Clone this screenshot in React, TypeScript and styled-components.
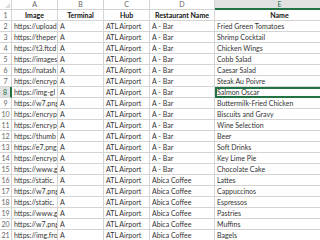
import React from 'react';
import styled, { createGlobalStyle } from 'styled-components';

const GlobalStyle = createGlobalStyle`
  html, body {
    margin: 0;
    padding: 0;
    background: #ffffff;
    overflow: hidden;
  }
`;

const rows: [string, string, string, string, string][] = [
  ['https://upload', 'A', 'ATL Airport', 'A - Bar', 'Fried Green Tomatoes'],
  ['https://theper', 'A', 'ATL Airport', 'A - Bar', 'Shrimp Cocktail'],
  ['https://t3.ftcd', 'A', 'ATL Airport', 'A - Bar', 'Chicken Wings'],
  ['https://images', 'A', 'ATL Airport', 'A - Bar', 'Cobb Salad'],
  ['https://natash', 'A', 'ATL Airport', 'A - Bar', 'Caesar Salad'],
  ['https://encryp', 'A', 'ATL Airport', 'A - Bar', 'Steak Au Poivre'],
  ['https://img-gl', 'A', 'ATL Airport', 'A - Bar', 'Salmon Oscar'],
  ['https://w7.png', 'A', 'ATL Airport', 'A - Bar', 'Buttermilk-Fried Chicken'],
  ['https://encryp', 'A', 'ATL Airport', 'A - Bar', 'Biscuits and Gravy'],
  ['https://encryp', 'A', 'ATL Airport', 'A - Bar', 'Wine Selection'],
  ['https://thumb', 'A', 'ATL Airport', 'A - Bar', 'Beer'],
  ['https://e7.png', 'A', 'ATL Airport', 'A - Bar', 'Soft Drinks'],
  ['https://encryp', 'A', 'ATL Airport', 'A - Bar', 'Key Lime Pie'],
  ['https://www.g', 'A', 'ATL Airport', 'A - Bar', 'Chocolate Cake'],
  ['https://static.', 'A', 'ATL Airport', 'Abica Coffee', 'Lattes'],
  ['https://w7.png', 'A', 'ATL Airport', 'Abica Coffee', 'Cappuccinos'],
  ['https://static.', 'A', 'ATL Airport', 'Abica Coffee', 'Espressos'],
  ['https://www.g', 'A', 'ATL Airport', 'Abica Coffee', 'Pastries'],
  ['https://w7.png', 'A', 'ATL Airport', 'Abica Coffee', 'Muffins'],
  ['https://img.fro', 'A', 'ATL Airport', 'Abica Coffee', 'Bagels'],
];

const headers = ['Image', 'Terminal', 'Hub', 'Restaurant Name', 'Name'];
const letters = ['A', 'B', 'C', 'D', 'E'];

const SELECTED_ROW = 8;
const SELECTED_COL = 4;

const Sheet = styled.div`
  display: grid;
  grid-template-columns: 12px 46px 46px 46px 65px 130px;
  grid-template-rows: 10px repeat(21, 11px);
  width: 320px;
  height: 240px;
  overflow: hidden;
  font-family: Lato, 'Liberation Sans', sans-serif;
  font-size: 7px;
  color: #333;
`;

const Corner = styled.div`
  background: #ffffff;
  border-right: 1px solid #d4d4d4;
  border-bottom: 1px solid #d4d4d4;
  position: relative;

  &::after {
    content: '';
    position: absolute;
    right: 1px;
    bottom: 1px;
    border-left: 5px solid transparent;
    border-bottom: 5px solid #dcdcdc;
  }
`;

const ColHead = styled.div<{ $active?: boolean }>`
  display: flex;
  align-items: center;
  justify-content: center;
  background: ${(p) => (p.$active ? '#e2e2e2' : '#ffffff')};
  color: ${(p) => (p.$active ? '#217346' : '#666')};
  border-right: 1px solid #d4d4d4;
  border-bottom: ${(p) => (p.$active ? '2px solid #217346' : '1px solid #d4d4d4')};
  box-sizing: border-box;
  font-size: 7px;
  line-height: 1;
`;

const RowHead = styled.div<{ $active?: boolean }>`
  display: flex;
  align-items: center;
  justify-content: center;
  background: ${(p) => (p.$active ? '#e2e2e2' : '#ffffff')};
  color: ${(p) => (p.$active ? '#217346' : '#666')};
  border-right: ${(p) => (p.$active ? '2px solid #217346' : '1px solid #d4d4d4')};
  border-bottom: 1px solid #d4d4d4;
  box-sizing: border-box;
  font-size: 7px;
  line-height: 1;
`;

const Cell = styled.div<{ $head?: boolean; $selected?: boolean }>`
  display: flex;
  align-items: center;
  justify-content: ${(p) => (p.$head ? 'center' : 'flex-start')};
  font-weight: ${(p) => (p.$head ? 700 : 400)};
  color: ${(p) => (p.$head ? '#111' : '#333')};
  padding: 0 2px;
  white-space: nowrap;
  overflow: hidden;
  box-sizing: border-box;
  border-right: 1px solid #d4d4d4;
  border-bottom: 1px solid #d4d4d4;
  line-height: 1;
  ${(p) =>
    p.$selected &&
    `
    outline: 2px solid #217346;
    outline-offset: -2px;
  `}
`;

export default function App() {
  return (
    <>
      <GlobalStyle />
      <Sheet>
        <Corner />
        {letters.map((l, i) => (
          <ColHead key={l} $active={i === SELECTED_COL}>
            {l}
          </ColHead>
        ))}

        <RowHead>1</RowHead>
        {headers.map((h) => (
          <Cell key={h} $head>
            {h}
          </Cell>
        ))}

        {rows.map((r, ri) => {
          const rowNum = ri + 2;
          return (
            <React.Fragment key={rowNum}>
              <RowHead $active={rowNum === SELECTED_ROW}>{rowNum}</RowHead>
              {r.map((v, ci) => (
                <Cell key={ci} $selected={rowNum === SELECTED_ROW && ci === SELECTED_COL}>
                  {v}
                </Cell>
              ))}
            </React.Fragment>
          );
        })}
      </Sheet>
    </>
  );
}
